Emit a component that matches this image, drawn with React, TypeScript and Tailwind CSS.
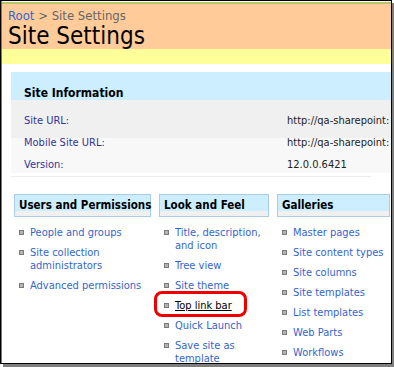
import React from "react";

const font = { fontFamily: '"DejaVu Sans Condensed", "DejaVu Sans", sans-serif' };

const users = [["People and groups"], ["Site collection", "administrators"], ["Advanced permissions"]];
const look = [
  ["Title, description,", "and icon"],
  ["Tree view"],
  ["Site theme"],
  ["Top link bar"],
  ["Quick Launch"],
  ["Save site as", "template"],
];
const galleries = [
  ["Master pages"],
  ["Site content types"],
  ["Site columns"],
  ["Site templates"],
  ["List templates"],
  ["Web Parts"],
  ["Workflows"],
];

const Bullet = () => (
  <span className="mt-[4px] h-[5px] w-[5px] shrink-0 border border-[#7a7a7a] bg-[#b4b4b4]" />
);

const Column = ({ title, items, width }: { title: string; items: string[][]; width: string }) => (
  <div className={`${width} shrink-0`}>
    <div className="flex h-[23px] items-center whitespace-nowrap border border-[#a9cde9] bg-[linear-gradient(#cceeff_0_16px,#f0f0f0_16px)] pl-[4px] text-[11.5px] font-bold text-black">
      {title}
    </div>
    <ul className="mt-[9px] flex flex-col gap-[7px]">
      {items.map((lines) => {
        const active = lines[0] === "Top link bar";
        return (
          <li key={lines[0]} className="relative flex gap-[6px] pl-[5px] text-[11px] leading-[13px]">
            <Bullet />
            <span className={active ? "text-black underline" : "text-[#3366cc]"}>
              {lines.map((l) => (
                <span key={l} className="block whitespace-nowrap">
                  {l}
                </span>
              ))}
            </span>
            {active && (
              <span className="pointer-events-none absolute left-[-5px] top-[-8px] h-[26px] w-[93px] rounded-[8px] border-[3px] border-[#ee0000]" />
            )}
          </li>
        );
      })}
    </ul>
  </div>
);

export default function App() {
  return (
    <div className="h-[367px] w-[394px] bg-white" style={font}>
      <div className="h-[364px] w-[392px] overflow-hidden border border-black shadow-[3px_3px_0_#7f7f7f]">
        <div className="h-full border-l border-[#4d7fd0] pt-px">
          <div className="border-t-2 border-[#b9c46c] bg-[#ffcc99] pl-[6px] pt-[4px]">
            <div className="text-[13px] leading-[15px]">
              <span className="text-[#3366cc]">Root</span>
              <span className="text-[#666666]"> &gt; Site Settings</span>
            </div>
            <div className="text-[24px] leading-[26px] text-black">Site Settings</div>
          </div>
          <div className="h-[15px] bg-[#ffff99]" />
          <div className="ml-[9px] mt-[8px]">
            <div className="flex h-[28px] items-end bg-[#cceeff] pl-[13px] text-[12px] font-bold leading-[13px] text-black">
              Site Information
            </div>
            <div className="h-[73px] bg-[linear-gradient(#f0f0f0_0_38px,#f8f8f8_38px)] pt-[10px] text-[11px]">
              {[
                ["Site URL:", "http://qa-sharepoint:"],
                ["Mobile Site URL:", "http://qa-sharepoint:"],
                ["Version:", "12.0.0.6421"],
              ].map(([k, v]) => (
                <div key={k} className="grid h-[22px] grid-cols-[263px_1fr] items-center pl-[13px]">
                  <span className="text-[#333399]">{k}</span>
                  <span className="whitespace-nowrap text-[#222222]">{v}</span>
                </div>
              ))}
            </div>
            <div className="mt-[3px] h-px w-[360px] bg-[#ececec]" />
            <div className="ml-[3px] mt-[17px] flex gap-[8px]">
              <Column title="Users and Permissions" items={users} width="w-[137px]" />
              <Column title="Look and Feel" items={look} width="w-[110px]" />
              <Column title="Galleries" items={galleries} width="w-[113px]" />
            </div>
          </div>
        </div>
      </div>
    </div>
  );
}
